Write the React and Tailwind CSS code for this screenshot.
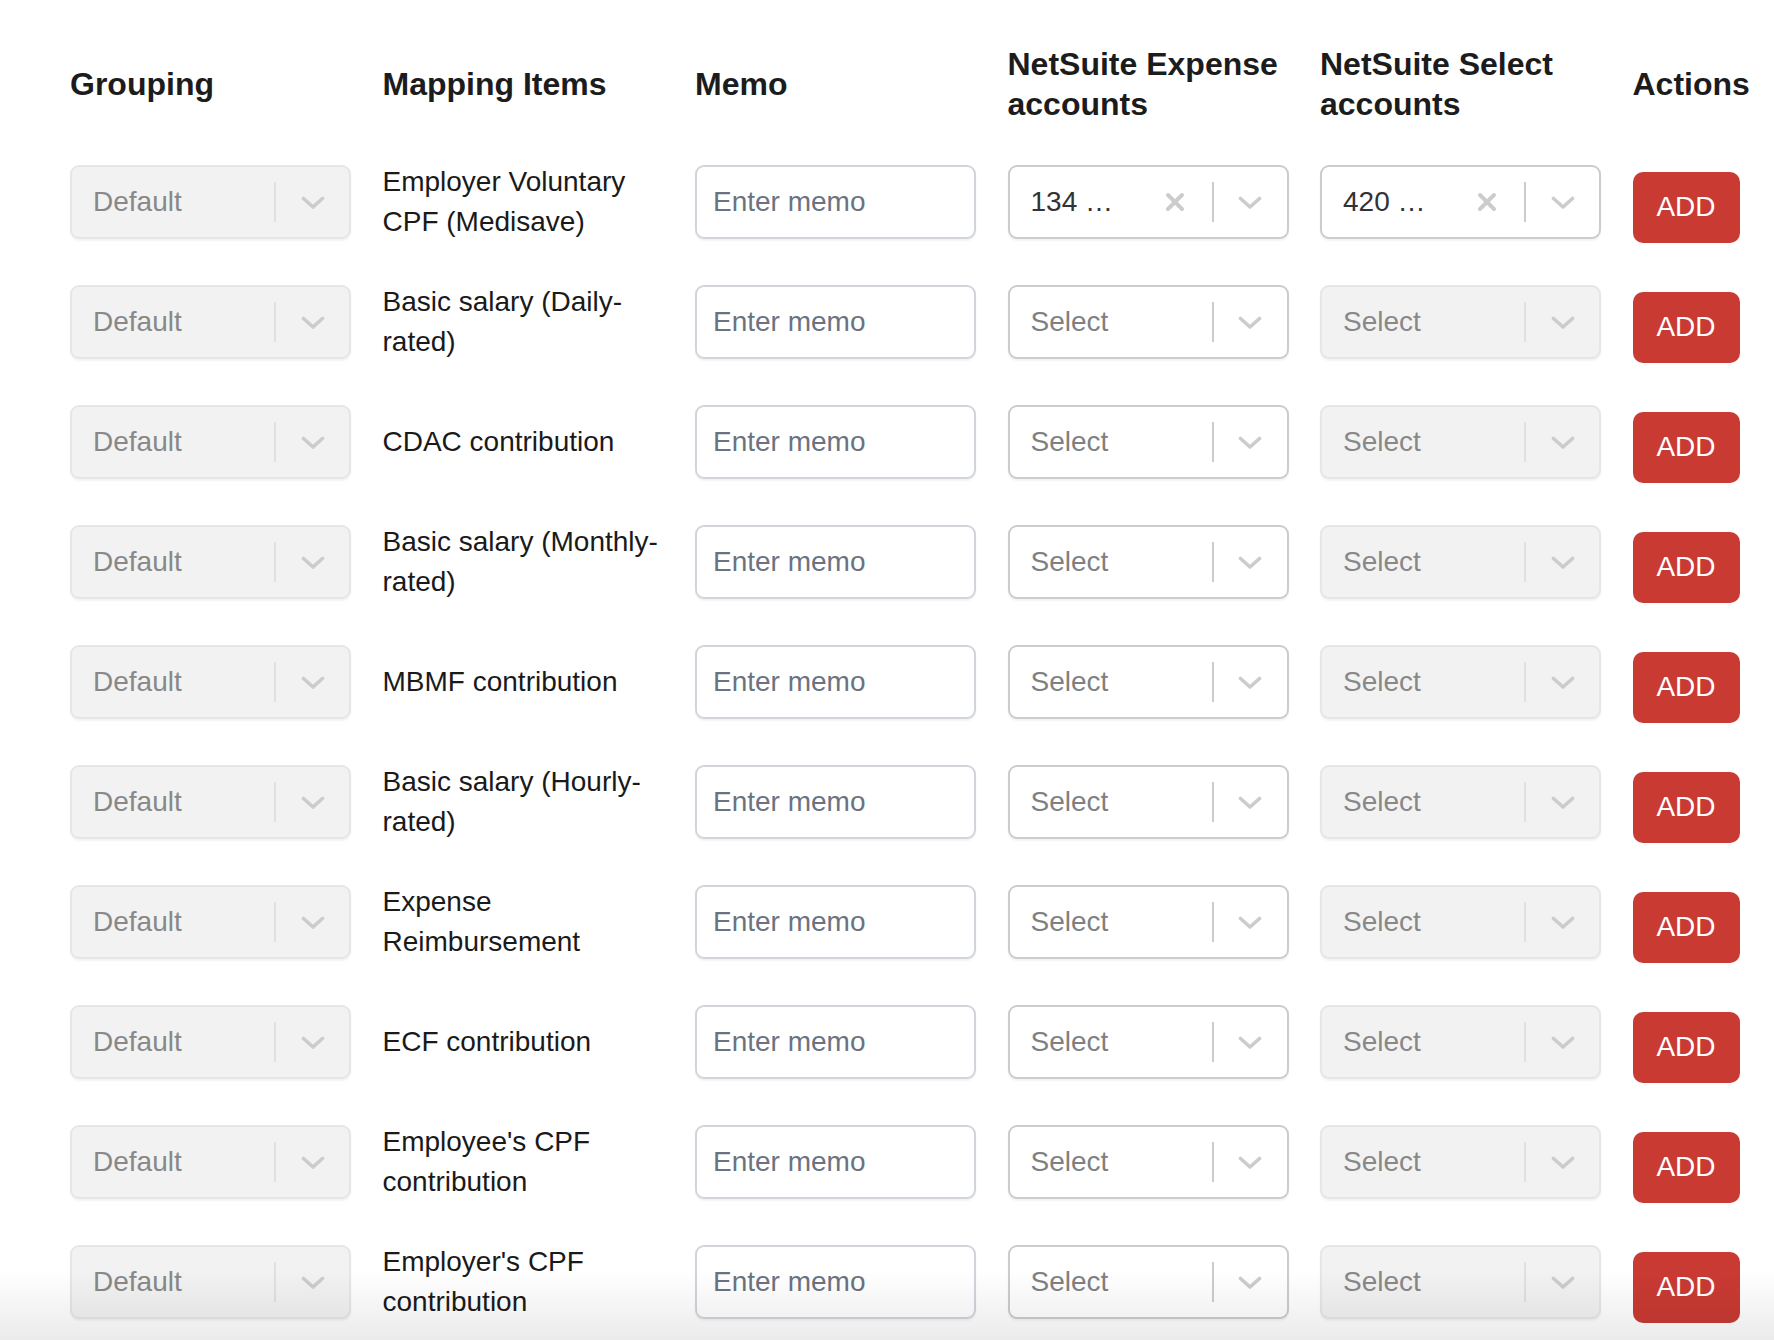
import React from "react";

const ROWS = [
  { item: "Employer Voluntary CPF (Medisave)", expense: "134 …", select: "420 …" },
  { item: "Basic salary (Daily-rated)" },
  { item: "CDAC contribution" },
  { item: "Basic salary (Monthly-rated)" },
  { item: "MBMF contribution" },
  { item: "Basic salary (Hourly-rated)" },
  { item: "Expense Reimbursement" },
  { item: "ECF contribution" },
  { item: "Employee's CPF contribution" },
  { item: "Employer's CPF contribution" },
];

function Chevron() {
  return (
    <svg width="24" height="14" viewBox="0 0 24 14" fill="none" className="mt-[2px] text-[#cccccc]">
      <path d="M2.5 2.5 L12 11 L21.5 2.5" stroke="currentColor" strokeWidth="3.6" strokeLinecap="round" strokeLinejoin="round" />
    </svg>
  );
}

function Cross() {
  return (
    <svg width="20" height="20" viewBox="0 0 20 20" fill="none" className="text-[#cccccc]">
      <path d="M3 3 L17 17 M17 3 L3 17" stroke="currentColor" strokeWidth="4" strokeLinecap="round" />
    </svg>
  );
}

function SelectBox({ value, placeholder, disabled }) {
  const box = disabled
    ? "bg-[#f2f2f2] border-[#e6e6e6]"
    : "bg-white border-[#cccccc]";
  return (
    <div
      className={`flex h-[74px] w-[281px] items-center rounded-[9px] border-2 ${box} shadow-[0_2px_2px_rgba(0,0,0,0.05)]`}
    >
      <div className="flex flex-1 items-center overflow-hidden pl-[21px]">
        {value ? (
          <span className="text-[28px] text-[#333333]">{value}</span>
        ) : (
          <span className={`text-[28px] ${disabled ? "text-[#888888]" : "text-[#808080]"}`}>{placeholder}</span>
        )}
      </div>
      {value ? (
        <div className="flex w-[47px] items-center justify-start">
          <Cross />
        </div>
      ) : null}
      <div className={`h-[40px] w-[2px] ${disabled ? "bg-[#e0e0e0]" : "bg-[#cccccc]"}`} />
      <div className="flex w-[73px] items-center justify-center">
        <Chevron />
      </div>
    </div>
  );
}

function MemoInput() {
  return (
    <input
      placeholder="Enter memo"
      className="h-[74px] w-[281px] rounded-[9px] border-2 border-[#d1d5db] bg-white px-[16px] text-[28px] text-[#1f2937] outline-none shadow-[0_2px_2px_rgba(0,0,0,0.05)] placeholder:text-[#6b7280]"
    />
  );
}

export default function App() {
  return (
    <div
      className="relative h-[1340px] overflow-hidden bg-white"
      style={{ fontFamily: '"Liberation Sans", Arial, Helvetica, sans-serif' }}
    >
      <div className="pl-[70px] pt-[44px]">
        <div className="grid h-[80px] grid-cols-[281px_281px_281px_281px_281px_auto] items-center gap-x-[31.5px] text-[32px] font-bold leading-[40px] text-[#1c1c1c]">
          <div>Grouping</div>
          <div>Mapping Items</div>
          <div>Memo</div>
          <div>NetSuite Expense accounts</div>
          <div>NetSuite Select accounts</div>
          <div>Actions</div>
        </div>

        <div className="mt-[18px]">
          {ROWS.map((row) => (
            <div
              key={row.item}
              className="grid h-[120px] grid-cols-[281px_281px_281px_281px_281px_auto] items-center gap-x-[31.5px]"
            >
              <SelectBox placeholder="Default" disabled />
              <div className="pr-1 text-[28px] leading-[40px] text-[#1a1a1a]">{row.item}</div>
              <MemoInput />
              <SelectBox value={row.expense} placeholder="Select" />
              <SelectBox value={row.select} placeholder="Select" disabled={!row.select} />
              <div className="mt-[10px]">
                <button className="flex h-[71px] w-[107px] items-center justify-center rounded-[10px] bg-[#c93a33] text-[28px] text-white">
                  ADD
                </button>
              </div>
            </div>
          ))}
        </div>
      </div>
      <div className="pointer-events-none absolute inset-x-0 bottom-0 h-[70px] bg-linear-to-b from-black/0 to-black/[0.08]" />
    </div>
  );
}
